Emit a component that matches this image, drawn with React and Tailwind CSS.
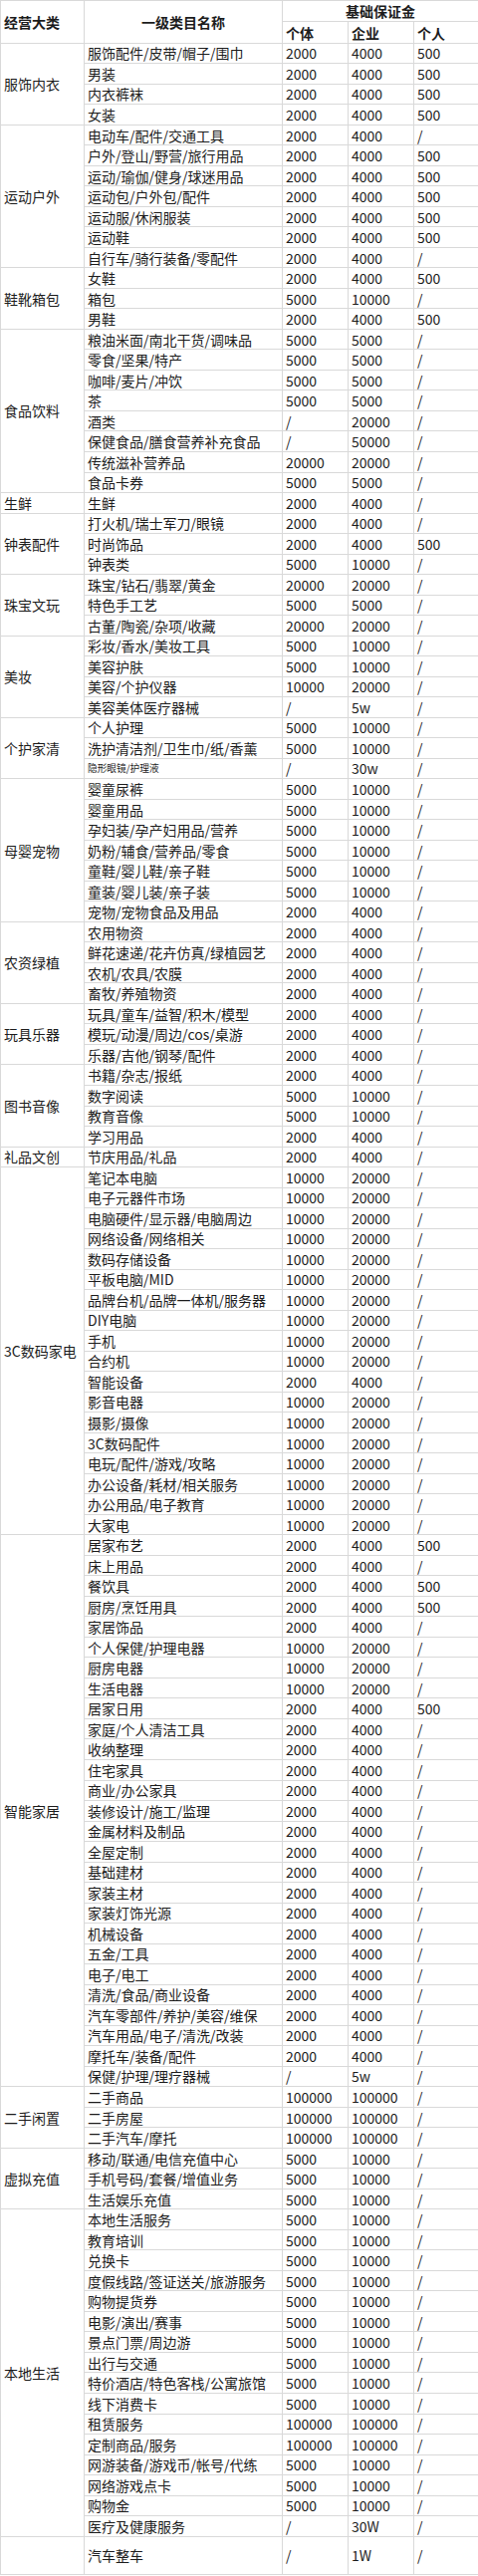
// Deposit table: business categories, first-level category names and base deposits.
import React from "react";

const groups = [
  {
    name: "服饰内衣",
    items: [
      ["服饰配件/皮带/帽子/围巾", "2000", "4000", "500"],
      ["男装", "2000", "4000", "500"],
      ["内衣裤袜", "2000", "4000", "500"],
      ["女装", "2000", "4000", "500"],
    ],
  },
  {
    name: "运动户外",
    items: [
      ["电动车/配件/交通工具", "2000", "4000", "/"],
      ["户外/登山/野营/旅行用品", "2000", "4000", "500"],
      ["运动/瑜伽/健身/球迷用品", "2000", "4000", "500"],
      ["运动包/户外包/配件", "2000", "4000", "500"],
      ["运动服/休闲服装", "2000", "4000", "500"],
      ["运动鞋", "2000", "4000", "500"],
      ["自行车/骑行装备/零配件", "2000", "4000", "/"],
    ],
  },
  {
    name: "鞋靴箱包",
    items: [
      ["女鞋", "2000", "4000", "500"],
      ["箱包", "5000", "10000", "/"],
      ["男鞋", "2000", "4000", "500"],
    ],
  },
  {
    name: "食品饮料",
    items: [
      ["粮油米面/南北干货/调味品", "5000", "5000", "/"],
      ["零食/坚果/特产", "5000", "5000", "/"],
      ["咖啡/麦片/冲饮", "5000", "5000", "/"],
      ["茶", "5000", "5000", "/"],
      ["酒类", "/", "20000", "/"],
      ["保健食品/膳食营养补充食品", "/", "50000", "/"],
      ["传统滋补营养品", "20000", "20000", "/"],
      ["食品卡券", "5000", "5000", "/"],
    ],
  },
  { name: "生鲜", items: [["生鲜", "2000", "4000", "/"]] },
  {
    name: "钟表配件",
    items: [
      ["打火机/瑞士军刀/眼镜", "2000", "4000", "/"],
      ["时尚饰品", "2000", "4000", "500"],
      ["钟表类", "5000", "10000", "/"],
    ],
  },
  {
    name: "珠宝文玩",
    items: [
      ["珠宝/钻石/翡翠/黄金", "20000", "20000", "/"],
      ["特色手工艺", "5000", "5000", "/"],
      ["古董/陶瓷/杂项/收藏", "20000", "20000", "/"],
    ],
  },
  {
    name: "美妆",
    items: [
      ["彩妆/香水/美妆工具", "5000", "10000", "/"],
      ["美容护肤", "5000", "10000", "/"],
      ["美容/个护仪器", "10000", "20000", "/"],
      ["美容美体医疗器械", "/", "5w", "/"],
    ],
  },
  {
    name: "个护家清",
    items: [
      ["个人护理", "5000", "10000", "/"],
      ["洗护清洁剂/卫生巾/纸/香薰", "5000", "10000", "/"],
      ["隐形眼镜/护理液", "/", "30w", "/", true],
    ],
  },
  {
    name: "母婴宠物",
    items: [
      ["婴童尿裤", "5000", "10000", "/"],
      ["婴童用品", "5000", "10000", "/"],
      ["孕妇装/孕产妇用品/营养", "5000", "10000", "/"],
      ["奶粉/辅食/营养品/零食", "5000", "10000", "/"],
      ["童鞋/婴儿鞋/亲子鞋", "5000", "10000", "/"],
      ["童装/婴儿装/亲子装", "5000", "10000", "/"],
      ["宠物/宠物食品及用品", "2000", "4000", "/"],
    ],
  },
  {
    name: "农资绿植",
    items: [
      ["农用物资", "2000", "4000", "/"],
      ["鲜花速递/花卉仿真/绿植园艺", "2000", "4000", "/"],
      ["农机/农具/农膜", "2000", "4000", "/"],
      ["畜牧/养殖物资", "2000", "4000", "/"],
    ],
  },
  {
    name: "玩具乐器",
    items: [
      ["玩具/童车/益智/积木/模型", "2000", "4000", "/"],
      ["模玩/动漫/周边/cos/桌游", "2000", "4000", "/"],
      ["乐器/吉他/钢琴/配件", "2000", "4000", "/"],
    ],
  },
  {
    name: "图书音像",
    items: [
      ["书籍/杂志/报纸", "2000", "4000", "/"],
      ["数字阅读", "5000", "10000", "/"],
      ["教育音像", "5000", "10000", "/"],
      ["学习用品", "2000", "4000", "/"],
    ],
  },
  { name: "礼品文创", items: [["节庆用品/礼品", "2000", "4000", "/"]] },
  {
    name: "3C数码家电",
    items: [
      ["笔记本电脑", "10000", "20000", "/"],
      ["电子元器件市场", "10000", "20000", "/"],
      ["电脑硬件/显示器/电脑周边", "10000", "20000", "/"],
      ["网络设备/网络相关", "10000", "20000", "/"],
      ["数码存储设备", "10000", "20000", "/"],
      ["平板电脑/MID", "10000", "20000", "/"],
      ["品牌台机/品牌一体机/服务器", "10000", "20000", "/"],
      ["DIY电脑", "10000", "20000", "/"],
      ["手机", "10000", "20000", "/"],
      ["合约机", "10000", "20000", "/"],
      ["智能设备", "2000", "4000", "/"],
      ["影音电器", "10000", "20000", "/"],
      ["摄影/摄像", "10000", "20000", "/"],
      ["3C数码配件", "10000", "20000", "/"],
      ["电玩/配件/游戏/攻略", "10000", "20000", "/"],
      ["办公设备/耗材/相关服务", "10000", "20000", "/"],
      ["办公用品/电子教育", "10000", "20000", "/"],
      ["大家电", "10000", "20000", "/"],
    ],
  },
  {
    name: "智能家居",
    items: [
      ["居家布艺", "2000", "4000", "500"],
      ["床上用品", "2000", "4000", "/"],
      ["餐饮具", "2000", "4000", "500"],
      ["厨房/烹饪用具", "2000", "4000", "500"],
      ["家居饰品", "2000", "4000", "/"],
      ["个人保健/护理电器", "10000", "20000", "/"],
      ["厨房电器", "10000", "20000", "/"],
      ["生活电器", "10000", "20000", "/"],
      ["居家日用", "2000", "4000", "500"],
      ["家庭/个人清洁工具", "2000", "4000", "/"],
      ["收纳整理", "2000", "4000", "/"],
      ["住宅家具", "2000", "4000", "/"],
      ["商业/办公家具", "2000", "4000", "/"],
      ["装修设计/施工/监理", "2000", "4000", "/"],
      ["金属材料及制品", "2000", "4000", "/"],
      ["全屋定制", "2000", "4000", "/"],
      ["基础建材", "2000", "4000", "/"],
      ["家装主材", "2000", "4000", "/"],
      ["家装灯饰光源", "2000", "4000", "/"],
      ["机械设备", "2000", "4000", "/"],
      ["五金/工具", "2000", "4000", "/"],
      ["电子/电工", "2000", "4000", "/"],
      ["清洗/食品/商业设备", "2000", "4000", "/"],
      ["汽车零部件/养护/美容/维保", "2000", "4000", "/"],
      ["汽车用品/电子/清洗/改装", "2000", "4000", "/"],
      ["摩托车/装备/配件", "2000", "4000", "/"],
      ["保健/护理/理疗器械", "/", "5w", "/"],
    ],
  },
  {
    name: "二手闲置",
    items: [
      ["二手商品", "100000", "100000", "/"],
      ["二手房屋", "100000", "100000", "/"],
      ["二手汽车/摩托", "100000", "100000", "/"],
    ],
  },
  {
    name: "虚拟充值",
    items: [
      ["移动/联通/电信充值中心", "5000", "10000", "/"],
      ["手机号码/套餐/增值业务", "5000", "10000", "/"],
      ["生活娱乐充值", "5000", "10000", "/"],
    ],
  },
  {
    name: "本地生活",
    items: [
      ["本地生活服务", "5000", "10000", "/"],
      ["教育培训", "5000", "10000", "/"],
      ["兑换卡", "5000", "10000", "/"],
      ["度假线路/签证送关/旅游服务", "5000", "10000", "/"],
      ["购物提货券", "5000", "10000", "/"],
      ["电影/演出/赛事", "5000", "10000", "/"],
      ["景点门票/周边游", "5000", "10000", "/"],
      ["出行与交通", "5000", "10000", "/"],
      ["特价酒店/特色客栈/公寓旅馆", "5000", "10000", "/"],
      ["线下消费卡", "5000", "10000", "/"],
      ["租赁服务", "100000", "100000", "/"],
      ["定制商品/服务", "100000", "100000", "/"],
      ["网游装备/游戏币/帐号/代练", "5000", "10000", "/"],
      ["网络游戏点卡", "5000", "10000", "/"],
      ["购物金", "5000", "10000", "/"],
      ["医疗及健康服务", "/", "30W", "/"],
    ],
  },
];

const cell = "border border-[#d9d9d9] px-[3px] py-0 align-middle whitespace-nowrap";

export default function App() {
  return (
    <div
      className="w-[480px] bg-white text-[#1c1c1c]"
      style={{ fontFamily: '"Noto Sans CJK SC", "Noto Sans", sans-serif' }}
    >
      <table className="w-[480px] table-fixed border-collapse text-left text-[14px] leading-none">
        <colgroup>
          <col className="w-[84px]" />
          <col className="w-[199px]" />
          <col className="w-[66px]" />
          <col className="w-[66px]" />
          <col className="w-[65px]" />
        </colgroup>
        <thead>
          <tr className="h-[21.35px]">
            <th rowSpan={2} className={`${cell} font-bold`}>
              经营大类
            </th>
            <th rowSpan={2} className={`${cell} text-center font-bold`}>
              一级类目名称
            </th>
            <th colSpan={3} className={`${cell} text-center font-bold`}>
              基础保证金
            </th>
          </tr>
          <tr className="h-[21.35px]">
            <th className={`${cell} font-bold`}>个体</th>
            <th className={`${cell} font-bold`}>企业</th>
            <th className={`${cell} font-bold`}>个人</th>
          </tr>
        </thead>
        <tbody>
          {groups.map((g) =>
            g.items.map((it, i) => (
              <tr key={g.name + it[0]} className="h-[20.53px]">
                {i === 0 && (
                  <td rowSpan={g.items.length} className={cell}>
                    {g.name}
                  </td>
                )}
                <td className={`${cell} ${it[4] ? "text-[9.7px]" : ""}`}>{it[0]}</td>
                <td className={cell}>{it[1]}</td>
                <td className={cell}>{it[2]}</td>
                <td className={cell}>{it[3]}</td>
              </tr>
            ))
          )}
          <tr className="h-[38px]">
            <td className={cell}></td>
            <td className={cell}>汽车整车</td>
            <td className={cell}>/</td>
            <td className={cell}>1W</td>
            <td className={cell}>/</td>
          </tr>
        </tbody>
      </table>
    </div>
  );
}
